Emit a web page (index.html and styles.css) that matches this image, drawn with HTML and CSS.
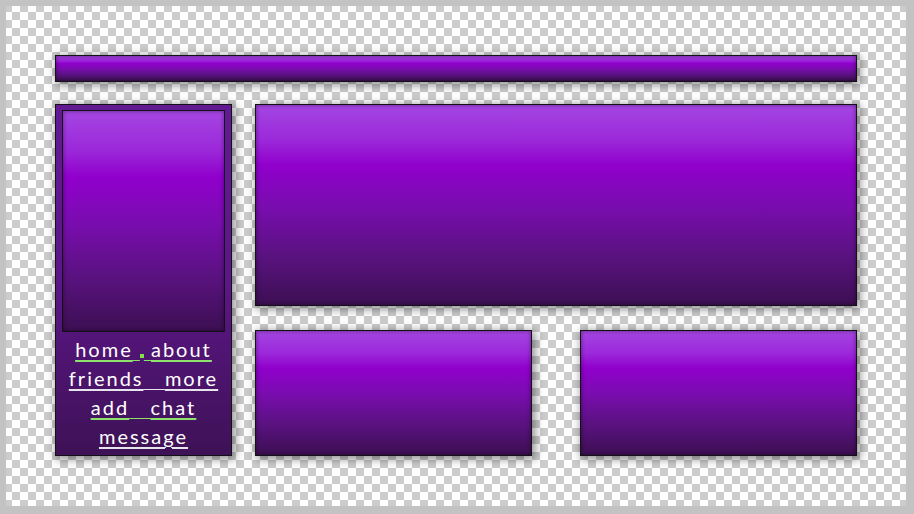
FILE: index.html
```html
<!DOCTYPE html>
<html>
<head>
<meta charset="utf-8">
<link rel="stylesheet" href="styles.css">
</head>
<body>
<div class="canvas">
  <div class="layout">
    <div class="box topbar"></div>
    <div class="side">
      <div class="box sidepic"></div>
      <nav class="menu">
        <div class="line g"><a>home</a> <span class="dot"></span> <a>about</a></div>
        <div class="line w"><a>friends</a>&nbsp;&nbsp; <a>more</a></div>
        <div class="line g"><a>add</a>&nbsp;&nbsp; <a>chat</a></div>
        <div class="line w"><a>message</a></div>
      </nav>
    </div>
    <div class="box main"></div>
    <div class="bottom">
      <div class="box"></div>
      <div class="box"></div>
    </div>
  </div>
</div>
</body>
</html>
```
FILE: styles.css
```css
html, body { margin: 0; padding: 0; }
body {
  background: #c3c3c3;
  width: 914px;
  height: 514px;
  overflow: hidden;
}
.canvas {
  margin: 6px;
  width: 900px;
  height: 500px;
  background-color: #ffffff;
  background-image: conic-gradient(#cccccc 25%, transparent 0 50%, #cccccc 0 75%, transparent 0);
  background-size: 16px 16px;
  background-position: -2px 6px;
  box-sizing: border-box;
  padding: 49px 0 0 49px;
}
.layout {
  display: grid;
  grid-template-columns: 177px 602px;
  grid-template-rows: 27px 202px 128px;
  column-gap: 23px;
  row-gap: 22px;
  width: 802px;
}
.box {
  box-sizing: border-box;
  border: 1px solid #151018;
  background: linear-gradient(#a446e2 0%, #9b28da 18%, #9000cc 30%, #7a0cb0 50%, #5a1280 75%, #3c0f52 100%);
  box-shadow: 2px 2px 9px 1px rgba(0,0,0,0.45), inset 0 0 4px rgba(0,0,0,0.45);
}
.topbar {
  grid-column: 1 / 3;
}
.side {
  grid-column: 1;
  grid-row: 2 / 4;
  box-sizing: border-box;
  border: 1px solid #151018;
  background: linear-gradient(#621a92 0%, #5c1688 50%, #3e1256 100%);
  box-shadow: 2px 2px 9px 1px rgba(0,0,0,0.45);
  padding: 5px 6px 0 6px;
  display: flex;
  flex-direction: column;
}
.sidepic {
  height: 222px;
  box-shadow: inset 0 0 4px rgba(0,0,0,0.45);
}
.main {
  grid-column: 2;
  grid-row: 2;
}
.bottom {
  grid-column: 2;
  grid-row: 3;
  display: flex;
  justify-content: space-between;
  margin-top: 2px;
}
.bottom .box { width: 277px; }
.menu {
  padding-top: 4px;
  display: flex;
  flex-direction: column;
  align-items: center;
  font-family: Lato, "Open Sans", sans-serif;
  font-weight: 400;
  font-size: 20px;
  letter-spacing: 2px;
  color: #ffffff;
}
.line {
  height: 29px;
  line-height: 26px;
  white-space: nowrap;
  text-decoration: underline;
  text-underline-offset: 3px;
  text-decoration-thickness: 1px;
}
.line.g { text-decoration-color: #8ee26c; }
.line.w { text-decoration-color: #e8e4ee; }
.line a { color: #ffffff; text-decoration: underline; text-decoration-color: inherit; }
.dot {
  display: inline-block;
  width: 4px;
  height: 4px;
  background: #7fe24a;
  vertical-align: -1px;
}
```
